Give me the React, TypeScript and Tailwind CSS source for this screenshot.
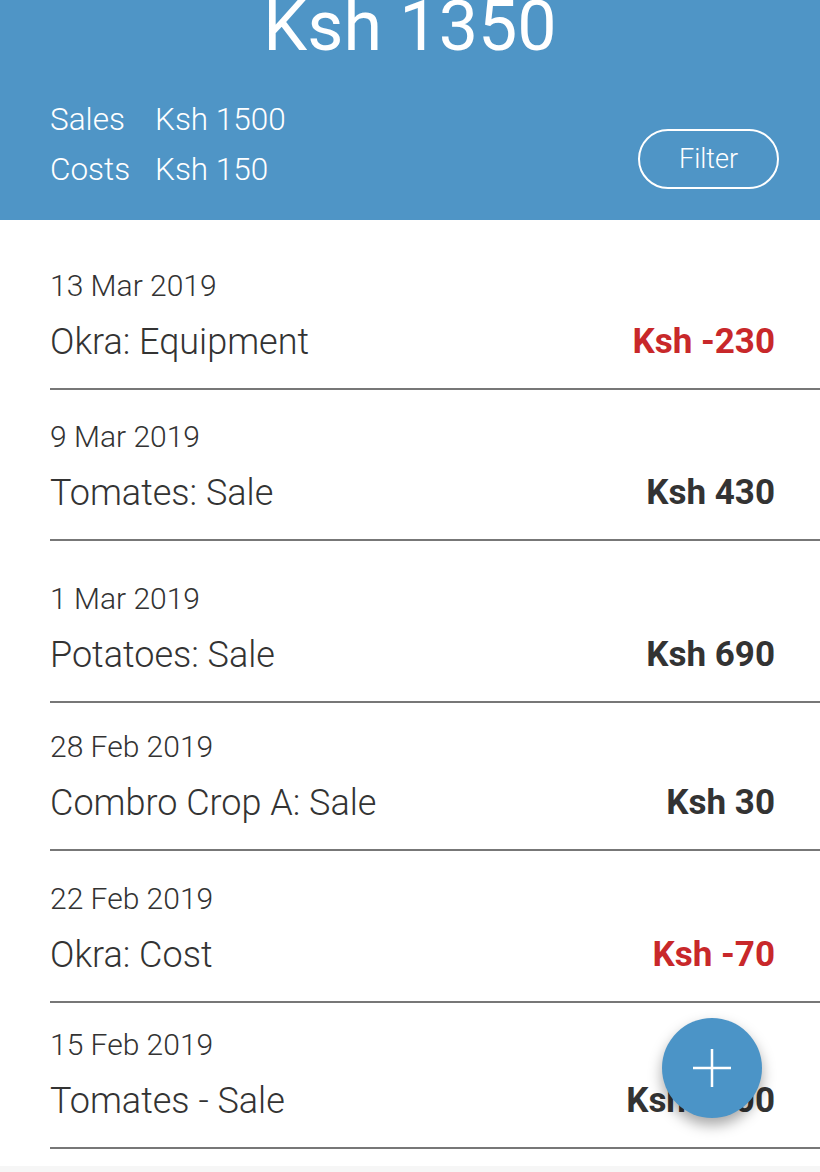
import React from "react";

type Row = { date: string; title: string; amount: string; neg: boolean; pt: string };

const rows: Row[] = [
  { date: "13 Mar 2019", title: "Okra: Equipment", amount: "Ksh -230", neg: true, pt: "pt-[49px]" },
  { date: "9 Mar 2019", title: "Tomates: Sale", amount: "Ksh 430", neg: false, pt: "pt-[30px]" },
  { date: "1 Mar 2019", title: "Potatoes: Sale", amount: "Ksh 690", neg: false, pt: "pt-[41px]" },
  { date: "28 Feb 2019", title: "Combro Crop A: Sale", amount: "Ksh 30", neg: false, pt: "pt-[27px]" },
  { date: "22 Feb 2019", title: "Okra: Cost", amount: "Ksh -70", neg: true, pt: "pt-[31px]" },
  { date: "15 Feb 2019", title: "Tomates - Sale", amount: "Ksh 1500", neg: false, pt: "pt-[25px]" },
];

export default function App() {
  return (
    <div
      className="relative w-[820px] h-[1172px] overflow-hidden bg-white text-[#333333]"
      style={{ fontFamily: "Roboto, 'Noto Sans', sans-serif" }}
    >
      <header className="h-[220px] bg-[#4f95c6] text-white flex flex-col overflow-hidden">
        <div className="-mt-[9px] text-center text-[70px] leading-[70px] font-normal">Ksh 1350</div>
        <div className="mt-[34px] flex justify-between pl-[50px] pr-[41px]">
          <div className="grid grid-cols-[105px_auto] text-[31.5px] leading-[50px] font-light">
            <span>Sales</span>
            <span>Ksh 1500</span>
            <span>Costs</span>
            <span>Ksh 150</span>
          </div>
          <button className="self-end mb-[6px] w-[141px] h-[60px] rounded-full border-2 border-white text-[27px] font-light text-white">
            Filter
          </button>
        </div>
      </header>

      <div className="flex flex-col">
        {rows.map((r) => (
          <div key={r.date} className={`ml-[50px] pr-[45px] pb-[26px] border-b-2 border-[#777777] ${r.pt}`}>
            <div className="text-[30px] leading-[34px] font-light">{r.date}</div>
            <div className="mt-[19px] flex items-center justify-between">
              <span className="text-[36px] leading-[40px] font-light">{r.title}</span>
              <span className={`text-[35px] leading-[40px] font-bold ${r.neg ? "text-[#c8282a]" : "text-[#333333]"}`}>
                {r.amount}
              </span>
            </div>
          </div>
        ))}
      </div>

      <div className="absolute left-0 right-0 bottom-0 h-[6px] bg-[#f6f6f6]" />

      <button className="absolute left-[662px] top-[1018px] w-[100px] h-[100px] rounded-full bg-[#4b94c7] shadow-[0_7px_14px_rgba(0,0,0,0.35)] flex items-center justify-center">
        <svg width="40" height="40" viewBox="0 0 40 40">
          <path d="M20 1v38M1 20h38" stroke="white" strokeWidth="2.5" />
        </svg>
      </button>
    </div>
  );
}
